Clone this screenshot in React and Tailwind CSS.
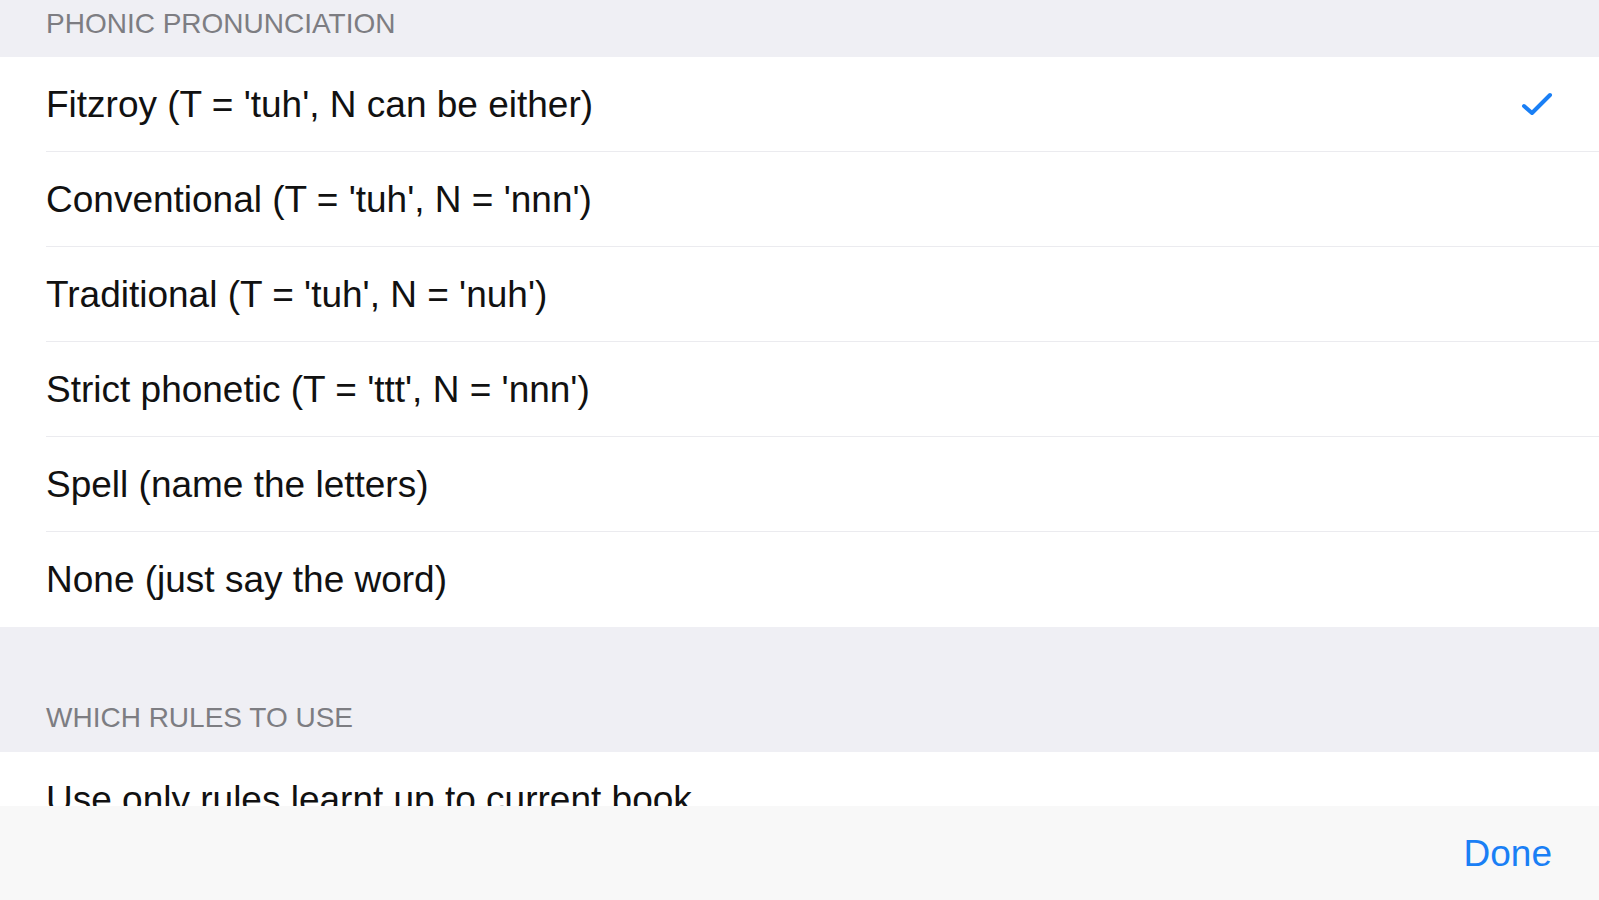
import React from 'react';

const font = { fontFamily: '"Liberation Sans", Arial, sans-serif' };

const options = [
    "Fitzroy (T = 'tuh', N can be either)",
    "Conventional (T = 'tuh', N = 'nnn')",
    "Traditional (T = 'tuh', N = 'nuh')",
    "Strict phonetic (T = 'ttt', N = 'nnn')",
    'Spell (name the letters)',
    'None (just say the word)',
];

const Check = () => (
    <svg width="32" height="26" viewBox="0 0 32 26" fill="none">
        <path d="M3 15 L11 22 L29 4" stroke="#1a7ff5" strokeWidth="4" strokeLinecap="round" strokeLinejoin="round" />
    </svg>
);

const Row = ({ label, checked, last }) => (
    <div className="bg-white pl-[46px]">
        <div className={`h-[95px] flex items-center justify-between pr-[46px] ${last ? '' : 'border-b border-[#ebebef]'}`}>
            <span className="text-[37px] leading-none text-[#111] whitespace-nowrap">{label}</span>
            {checked && <Check />}
        </div>
    </div>
);

export default function App() {
    const selected = 0;

    return (
        <div className="w-[1599px] h-[900px] flex flex-col overflow-hidden bg-[#efeff4]" style={font}>
            <div className="h-[806px] overflow-hidden flex flex-col">
                {/* Phonic pronunciation */}
                <div className="h-[57px] shrink-0 pt-[10px] pl-[46px] text-[28px] leading-[28px] text-[#7d7d82] uppercase">
                    Phonic pronunciation
                </div>
                {options.map((o, i) => (
                    <Row key={o} label={o} checked={i === selected} last={i === options.length - 1} />
                ))}

                {/* Which rules */}
                <div className="h-[125px] shrink-0 flex items-end pb-[20px] pl-[46px] text-[28px] leading-[28px] text-[#7d7d82] uppercase">
                    Which rules to use
                </div>
                <Row label="Use only rules learnt up to current book" last />
            </div>

            {/* Toolbar */}
            <div className="h-[94px] shrink-0 bg-[#f8f8f8] flex items-center justify-end pr-[47px]">
                <button className="text-[37px] leading-none text-[#1a7ff5]">Done</button>
            </div>
        </div>
    );
}
